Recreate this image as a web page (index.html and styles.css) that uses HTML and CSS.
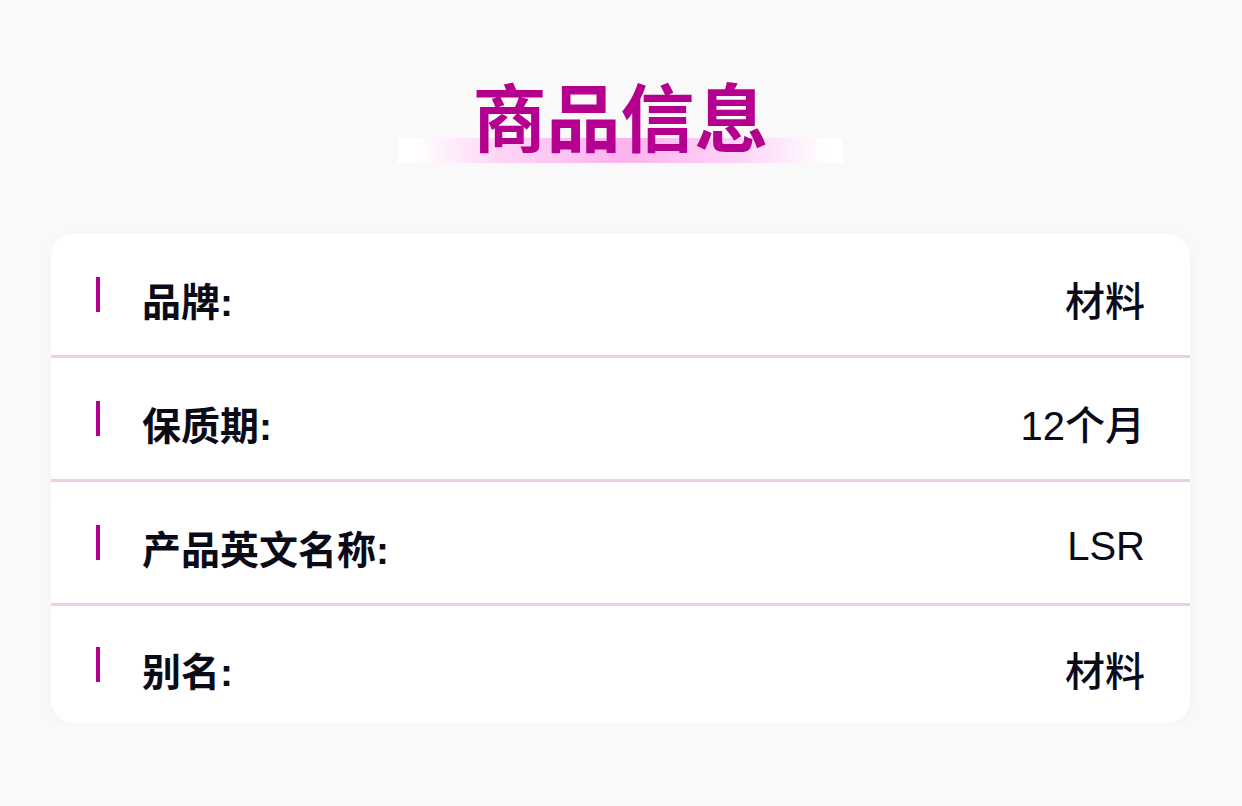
FILE: index.html
```html
<!DOCTYPE html>
<html lang="zh">
<head>
<meta charset="utf-8">
<link rel="stylesheet" href="styles.css">
</head>
<body>
<div class="page">
  <div class="title-wrap">
    <h1 class="title">商品信息</h1>
  </div>
  <div class="card">
    <div class="row">
      <span class="mark"></span>
      <span class="label">品牌:</span>
      <span class="value">材料</span>
    </div>
    <div class="row">
      <span class="mark"></span>
      <span class="label">保质期:</span>
      <span class="value">12个月</span>
    </div>
    <div class="row">
      <span class="mark"></span>
      <span class="label">产品英文名称:</span>
      <span class="value">LSR</span>
    </div>
    <div class="row">
      <span class="mark"></span>
      <span class="label">别名:</span>
      <span class="value">材料</span>
    </div>
  </div>
</div>
</body>
</html>
```

FILE: styles.css
```css
html, body {
  margin: 0;
  padding: 0;
  background: #f9f9f9;
}
body {
  font-family: "Liberation Sans", "Noto Sans CJK SC", sans-serif;
  color: #0b0b18;
}
.page {
  padding: 81px 52px 0 51px;
}
.title-wrap {
  display: flex;
  justify-content: center;
  margin-bottom: 73px;
}
.title {
  position: relative;
  margin: 0;
  font-size: 74px;
  line-height: 80px;
  font-weight: 700;
  color: #b5008f;
  z-index: 0;
}
.title::before {
  content: "";
  position: absolute;
  left: -75px;
  right: -74px;
  top: 57px;
  height: 25px;
  background: linear-gradient(to right, #ffffff 0%, #ffffff 4%, #fed6f7 22%, #fcb2ef 50%, #fed6f7 78%, #ffffff 96%, #ffffff 100%);
  z-index: -1;
}
.card {
  background: #fff;
  border-radius: 22px;
  box-shadow: 0 2px 12px rgba(0, 0, 0, 0.03);
  overflow: hidden;
}
.row {
  display: flex;
  align-items: center;
  height: 121px;
  padding: 0 45px 0 45px;
  border-bottom: 3px solid #f0cce8;
}
.row:last-child {
  border-bottom: none;
  height: 117px;
}
.mark {
  width: 4px;
  height: 35px;
  background: #b5008f;
  margin-right: 42px;
  flex: none;
}
.label {
  font-size: 39px;
  font-weight: 700;
  flex: 1;
  padding-top: 8px;
}
.value {
  font-size: 40px;
  font-weight: 500;
  padding-top: 8px;
}
```
